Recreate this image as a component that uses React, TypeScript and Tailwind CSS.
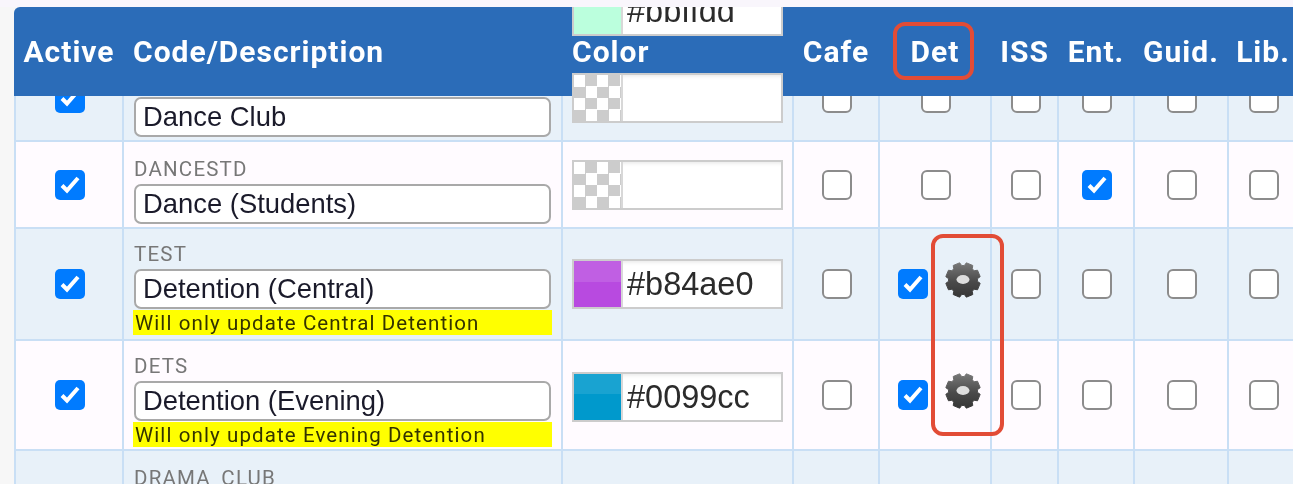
import React from "react";

const COLS =
  "grid grid-cols-[108px_439px_231px_86px_112px_67px_76px_94px_70px]";
const LINE = "border-l-2 border-[#c9dff5]";

const FLAGS = ["cafe", "det", "iss", "ent", "guid", "lib"] as const;
type Flag = (typeof FLAGS)[number];

type Row = {
  height: string;
  pad?: string;
  colorPad?: string;
  code?: string;
  desc?: string;
  note?: string;
  color?: string;
  light?: string;
  on?: Flag[];
  gear?: boolean;
  bare?: boolean;
};

const rows: Row[] = [
  { height: "h-[87px]", color: "#bbffdd", light: "#bbffdd" },
  { height: "h-[87px]", desc: "Dance Club" },
  { height: "h-[87px]", code: "DANCESTD", desc: "Dance (Students)", on: ["ent"] },
  {
    height: "h-[112px]",
    pad: "pb-[4px]",
    code: "TEST",
    desc: "Detention (Central)",
    note: "Will only update Central Detention",
    color: "#b84ae0",
    light: "#c05fe3",
    on: ["det"],
    gear: true,
  },
  {
    height: "h-[110px]",
    pad: "pb-[2px]",
    colorPad: "pt-[3px]",
    code: "DETS",
    desc: "Detention (Evening)",
    note: "Will only update Evening Detention",
    color: "#0099cc",
    light: "#19a3d1",
    on: ["det"],
    gear: true,
  },
  { height: "h-[87px]", code: "DRAMA_CLUB", bare: true },
];

const Checkbox = ({ checked }: { checked?: boolean }) =>
  checked ? (
    <span className="block w-[30px] h-[30px] shrink-0 rounded-[5px] bg-[#007bff]">
      <svg viewBox="0 0 30 30" className="w-full h-full">
        <path
          d="M7 15.5 L12 20.5 L23 8"
          fill="none"
          stroke="#fff"
          strokeWidth="4"
        />
      </svg>
    </span>
  ) : (
    <span className="block w-[30px] h-[30px] shrink-0 rounded-[6px] bg-white border-2 border-[#8c8c8c]" />
  );

// 8 tooth gear, outline worked out once
const gearPath = (() => {
  const pts: string[] = [];
  for (let i = 0; i < 8; i++) {
    const a = (i * Math.PI) / 4 - Math.PI / 8;
    [
      [14.5, -0.3],
      [17.5, -0.2],
      [17.5, 0.2],
      [14.5, 0.3],
    ].forEach(([r, d]) => {
      pts.push(
        `${(18 + r * Math.cos(a + d)).toFixed(2)} ${(18 + r * Math.sin(a + d)).toFixed(2)}`
      );
    });
  }
  return `M${pts.join(" L")} Z`;
})();

const Gear = ({ id }: { id: string }) => (
  <svg
    viewBox="0 0 36 36"
    className="w-9 h-9 shrink-0 ml-[17px] -mr-[6px] mb-2 blur-[0.5px]"
  >
    <defs>
      <linearGradient id={id} x1="0" y1="0" x2="0" y2="1">
        <stop offset="0" stopColor="#787878" />
        <stop offset="0.55" stopColor="#4a4a4a" />
        <stop offset="1" stopColor="#363636" />
      </linearGradient>
    </defs>
    <path
      d={gearPath}
      fill={`url(#${id})`}
      stroke={`url(#${id})`}
      strokeWidth="1"
      strokeLinejoin="round"
    />
    <ellipse cx="18" cy="17.5" rx="6.5" ry="4.4" fill="#dedede" />
  </svg>
);

const ColorInput = ({ color, light }: { color?: string; light?: string }) => (
  <div className="relative z-20 flex w-[211px] h-[50px] border-2 border-[#cccccc] bg-white shadow-[inset_0_4px_4px_-3px_#e5e5e5]">
    {color ? (
      <span className="w-[47px] shrink-0 flex flex-col">
        <span className="h-[45%]" style={{ backgroundColor: light }} />
        <span className="flex-1" style={{ backgroundColor: color }} />
      </span>
    ) : (
      <span className="w-[47px] shrink-0 bg-[conic-gradient(#ccc_25%,#fff_0_50%,#ccc_0_75%,#fff_0)] bg-[length:23px_23px]" />
    )}
    <span className="border-l-2 border-[#d8d8d8] pl-[4px] leading-[46px] text-[32.5px] text-[#2b2b2b] font-['Liberation_Sans',sans-serif]">
      {color}
    </span>
  </div>
);

const TableRow = ({ row, index }: { row: Row; index: number }) => {
  const bg = index % 2 === 1 ? "bg-[#e8f1f9]" : "bg-[#fffbff]";
  const cell = `${LINE} flex items-center justify-center pl-[2px]`;

  return (
    <div className={`${COLS} ${row.height} ${bg} border-b-2 border-[#c9dff5]`}>
      <div className={cell}>{!row.bare && <Checkbox checked />}</div>

      <div
        className={`${LINE} flex flex-col justify-end pl-[10px] ${row.pad ?? "pb-[3px]"}`}
      >
        {row.code && (
          <div className="text-[20.5px] leading-[30px] tracking-[1.2px] text-[#777777] font-['Roboto',sans-serif]">
            {row.code}
          </div>
        )}
        {row.desc && (
          <div className="w-[417px] h-[40px] rounded-[7px] border-2 border-[#a9a9a9] bg-white pl-[7px] leading-[36px] text-[27.4px] text-[#1a1a2a] font-['Liberation_Sans',sans-serif]">
            {row.desc}
          </div>
        )}
        {row.bare && <div className="h-[40px]" />}
        {row.note && (
          <div className="w-[419px] h-[25px] mt-[1px] -ml-[1px] bg-[#ffff00] pl-[2px] leading-[26px] text-[20.5px] tracking-[1.1px] text-[#333300] font-['Roboto',sans-serif]">
            {row.note}
          </div>
        )}
      </div>

      <div className={`${LINE} flex items-center pl-[9px] ${row.colorPad ?? ""}`}>
        {!row.bare && <ColorInput color={row.color} light={row.light} />}
      </div>

      {FLAGS.map((flag) => (
        <div key={flag} className={cell}>
          {!row.bare && <Checkbox checked={row.on?.includes(flag)} />}
          {row.gear && flag === "det" && <Gear id={`gear-${index}`} />}
        </div>
      ))}
    </div>
  );
};

const App = () => {
  const heads = ["Cafe", "Det", "ISS", "Ent.", "Guid.", "Lib."];

  return (
    <div className="relative w-[1293px] h-[484px] overflow-hidden bg-[#f7f7f7] blur-[0.4px]">
      <div className="h-[7px] bg-[#f9f6fc]" />

      <div className="relative ml-[14px] h-[477px] overflow-hidden rounded-tl-[6px]">
        <div
          className={`absolute top-0 left-0 z-10 ${COLS} h-[89px] items-center bg-[#2b6cb8] text-white text-[30px] font-bold tracking-[1px] font-['Roboto',sans-serif]`}
        >
          <div className="text-center pl-[2px]">Active</div>
          <div className="pl-[11px]">Code/Description</div>
          <div className="pl-[11px]">Color</div>
          {heads.map((h) => (
            <div key={h} className="text-center pl-[2px]">
              {h}
            </div>
          ))}
        </div>

        <div className="-mt-[39px]">
          {rows.map((row, i) => (
            <TableRow key={i} row={row} index={i} />
          ))}
        </div>
      </div>

      <div className="absolute z-30 left-[893px] top-[22px] w-[81px] h-[58px] rounded-[12px] border-4 border-[#e24c36]" />
      <div className="absolute z-30 left-[931px] top-[234px] w-[73px] h-[202px] rounded-[12px] border-4 border-[#e24c36]" />
    </div>
  );
};

export default App;
